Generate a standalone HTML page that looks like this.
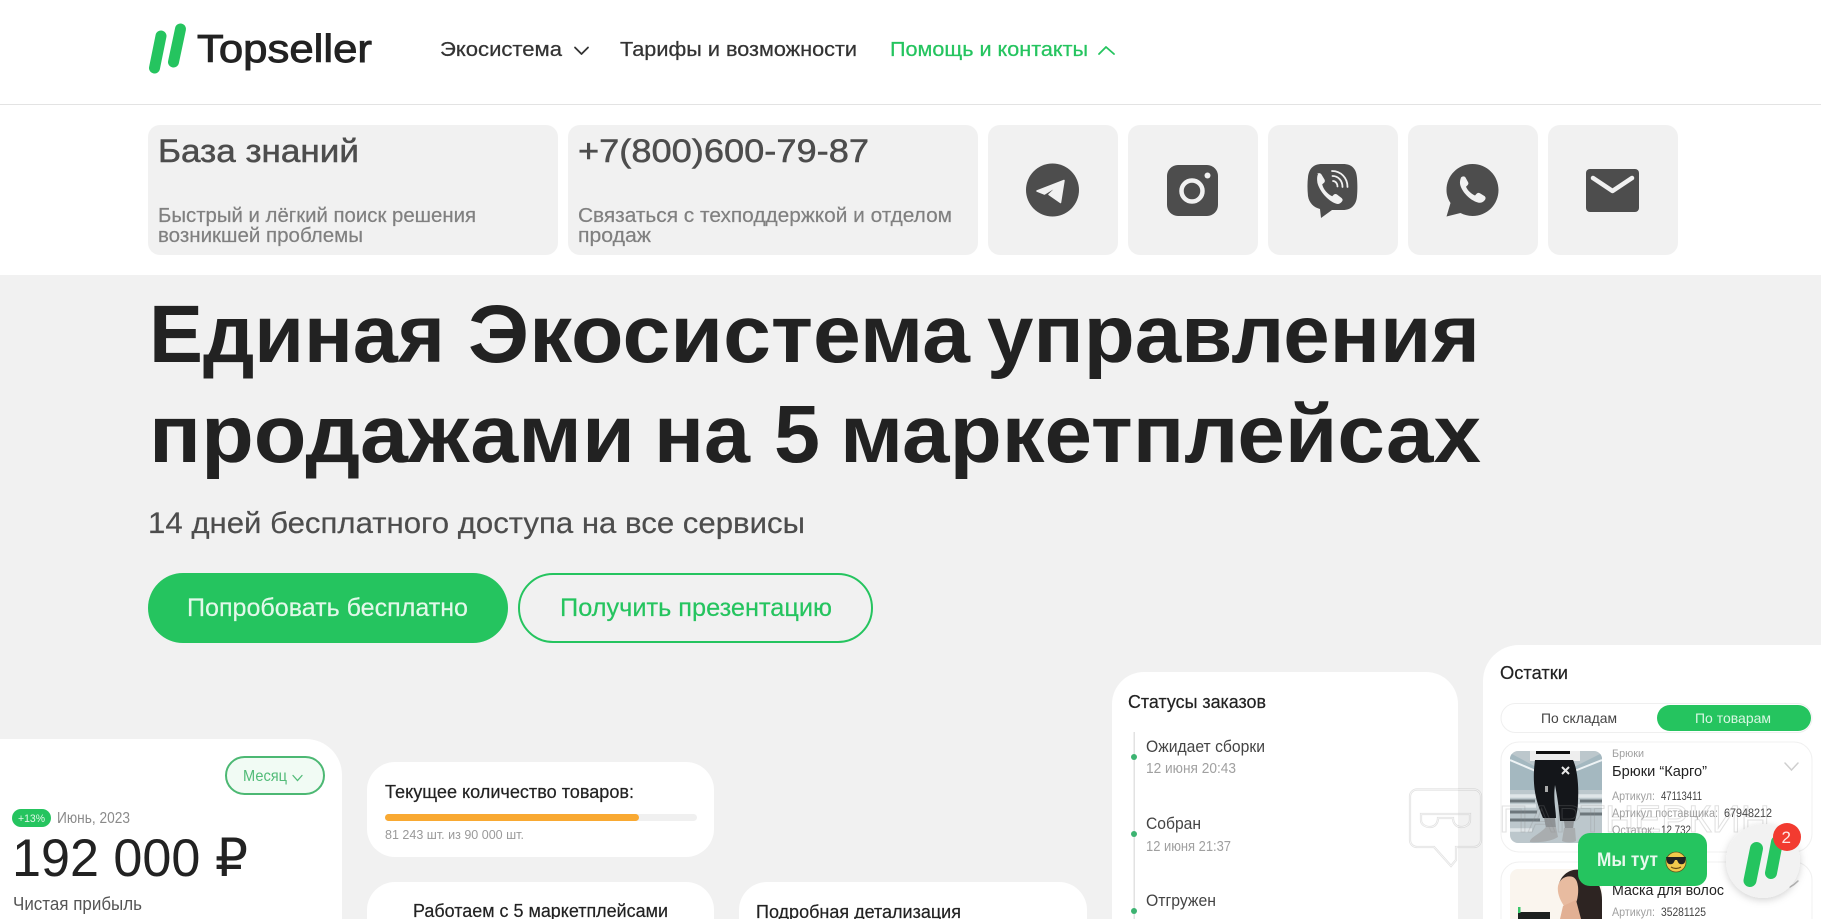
<!DOCTYPE html>
<html lang="ru"><head><meta charset="utf-8"><title>Topseller</title>
<style>
html,body{margin:0;padding:0;width:1821px;height:919px;overflow:hidden;background:#fff}
svg{display:block;position:absolute;left:0;top:0;overflow:hidden}
text{font-family:"Liberation Sans","DejaVu Sans",sans-serif;white-space:pre}
.b{font-weight:700}
</style></head><body>
<svg width="1821" height="919" viewBox="0 0 1821 919" xmlns="http://www.w3.org/2000/svg">
<defs>
<filter id="sh" x="-30%" y="-30%" width="160%" height="160%"><feDropShadow dx="0" dy="2" stdDeviation="4" flood-color="#000" flood-opacity=".18"/></filter>
<clipPath id="c1"><rect x="1510" y="751" width="92" height="92" rx="8"/></clipPath>
<clipPath id="c2"><path d="M1510 919V877a8 8 0 0 1 8-8H1594a8 8 0 0 1 8 8V919Z"/></clipPath>
</defs>
<rect width="1821" height="919" fill="#fff"/>
<!-- header -->
<path d="M154.500 68 161 36" stroke="#25c45f" stroke-width="11" stroke-linecap="round"/>
<path d="M173.500 62 180.500 29" stroke="#25c45f" stroke-width="11" stroke-linecap="round"/>
<text x="197" y="62" font-size="39" fill="#222" textLength="175" lengthAdjust="spacingAndGlyphs" stroke="#222" stroke-width=".9">Topseller</text>
<text x="440" y="56" font-size="20.500" fill="#333" stroke="#333" stroke-width=".25" textLength="122" lengthAdjust="spacingAndGlyphs">Экосистема</text>
<path d="M575 47.500 581.500 54 588 47.500" fill="none" stroke="#333" stroke-width="1.800" stroke-linecap="round" stroke-linejoin="round"/>
<text x="620" y="56" font-size="20.500" fill="#333" stroke="#333" stroke-width=".25" textLength="237" lengthAdjust="spacingAndGlyphs">Тарифы и возможности</text>
<text x="890" y="56" font-size="20.500" fill="#25c45f" stroke="#25c45f" stroke-width=".25" textLength="198" lengthAdjust="spacingAndGlyphs">Помощь и контакты</text>
<path d="M1099 54 1106 47 1114 54" fill="none" stroke="#25c45f" stroke-width="1.800" stroke-linecap="round" stroke-linejoin="round"/>
<rect x="0" y="104" width="1821" height="1" fill="#e3e3e3"/>
<!-- contact row -->
<g fill="#f1f1f1">
<rect x="148" y="125" width="410" height="130" rx="12"/>
<rect x="568" y="125" width="410" height="130" rx="12"/>
<rect x="988" y="125" width="130" height="130" rx="12"/>
<rect x="1128" y="125" width="130" height="130" rx="12"/>
<rect x="1268" y="125" width="130" height="130" rx="12"/>
<rect x="1408" y="125" width="130" height="130" rx="12"/>
<rect x="1548" y="125" width="130" height="130" rx="12"/>
</g>
<text x="158" y="162" font-size="32.500" fill="#4d4d4d" stroke="#4d4d4d" stroke-width=".5" textLength="201" lengthAdjust="spacingAndGlyphs">База знаний</text>
<text x="578" y="162" font-size="32.500" fill="#4d4d4d" stroke="#4d4d4d" stroke-width=".5" textLength="291" lengthAdjust="spacingAndGlyphs">+7(800)600-79-87</text>
<g font-size="20" fill="#808080" stroke="#808080" stroke-width=".2">
<text x="158" y="222" textLength="318" lengthAdjust="spacingAndGlyphs">Быстрый и лёгкий поиск решения</text>
<text x="158" y="242" textLength="205" lengthAdjust="spacingAndGlyphs">возникшей проблемы</text>
<text x="578" y="222" textLength="374" lengthAdjust="spacingAndGlyphs">Связаться с техподдержкой и отделом</text>
<text x="578" y="242" textLength="73" lengthAdjust="spacingAndGlyphs">продаж</text>
</g>
<!-- telegram -->
<circle cx="1052.500" cy="190" r="26.500" fill="#4d4d4d"/>
<path d="M1037 191 1064 180.500 1060.500 202.500 1049 194.500 1059 185 1044.500 194Z" fill="#f1f1f1" stroke="#f1f1f1" stroke-width="1.500" stroke-linejoin="round"/>
<!-- instagram -->
<rect x="1167" y="165" width="51" height="51" rx="11" fill="#4d4d4d"/>
<circle cx="1192" cy="191" r="10.500" fill="none" stroke="#f1f1f1" stroke-width="4.500"/>
<circle cx="1207.500" cy="175.500" r="3" fill="#f1f1f1"/>
<!-- viber -->
<path d="M1322 164h21c9 0 13.500 5 14 14 .5 7 .5 12 0 18-.5 9-6 14-14 14h-11l-11 8-1-9c-6-1.500-11-6-12-13-.7-7-.7-13 0-19 1-8 5-13 14-13Z" fill="#4d4d4d"/>
<path d="M1317 174c2-1.500 3.500-1 4.500.5l3 5c.8 1.500.3 2.800-1 3.800l-1.300 1c1 5 5.500 10 10 12l1.500-1.500c1-1 2.200-1 3.500-.2l4.500 3.500c1.200 1 1.200 2.400.2 3.500-1.500 2-3.500 2.800-5.500 2.200-9-3-17-13-19-21-.5-3.500-.5-6.500.6-8.800Z" fill="#f1f1f1"/>
<path d="M1332 171c9 0 15.500 7 15.500 16M1332.500 176c6 0 10 5 10 11M1333 181c2.500 0 4.500 2.500 4.500 5.500" fill="none" stroke="#f1f1f1" stroke-width="1.800" stroke-linecap="round"/>
<!-- whatsapp -->
<path d="M1472.500 164c14.500 0 26 11.500 26 26s-11.500 26-26 26c-4.500 0-8.500-1.200-12-3l-14 3.500 4-13.500c-2.500-4-4-8-4-13 0-14.500 11.500-26 26-26Z" fill="#4d4d4d"/>
<path d="M1461 177.500c1.500-1.500 3.500-1.500 4.500 0l2.500 4.500c.8 1.300.4 2.400-.6 3.400l-1.400 1.400c1.500 3.500 5 7 9 8.700l1.600-1.700c1-1 2.200-1.100 3.300-.5l4.500 2.700c1.400 1 1.500 2.500.5 4-2 2.500-4.500 3.300-7 2.500-8.500-2.500-15.500-10.500-17.500-17-1-3.500 0-6.200.6-8Z" fill="#f1f1f1"/>
<!-- mail -->
<rect x="1586" y="169" width="53" height="43" rx="4" fill="#4d4d4d"/>
<path d="M1593 178 1612.500 191 1632 178" fill="none" stroke="#f1f1f1" stroke-width="4.500" stroke-linecap="round" stroke-linejoin="round"/>
<!-- hero -->
<rect x="0" y="275" width="1821" height="644" fill="#f1f1f1"/>
<g class="b" font-size="82" fill="#222">
<text x="149" y="362" textLength="296" lengthAdjust="spacingAndGlyphs">Единая</text>
<text x="468" y="362" textLength="502" lengthAdjust="spacingAndGlyphs">Экосистема</text>
<text x="987" y="362" textLength="493" lengthAdjust="spacingAndGlyphs">управления</text>
<text x="149" y="462" textLength="486" lengthAdjust="spacingAndGlyphs">продажами</text>
<text x="654" y="462" textLength="96" lengthAdjust="spacingAndGlyphs">на</text>
<text x="774" y="462" textLength="46" lengthAdjust="spacingAndGlyphs">5</text>
<text x="840" y="462" textLength="641" lengthAdjust="spacingAndGlyphs">маркетплейсах</text>
</g>
<text x="148" y="533" font-size="30" fill="#4d4d4d" stroke="#4d4d4d" stroke-width=".2" textLength="657" lengthAdjust="spacingAndGlyphs">14 дней бесплатного доступа на все сервисы</text>
<rect x="148" y="573" width="360" height="70" rx="35" fill="#25c45f"/>
<text x="187" y="616" font-size="25" fill="#e2f8e9" stroke="#e2f8e9" stroke-width=".2" textLength="281" lengthAdjust="spacingAndGlyphs">Попробовать бесплатно</text>
<rect x="519" y="574" width="353" height="68" rx="34" fill="none" stroke="#25c45f" stroke-width="2"/>
<text x="560" y="616" font-size="25" fill="#25c45f" stroke="#25c45f" stroke-width=".2" textLength="272" lengthAdjust="spacingAndGlyphs">Получить презентацию</text>
<!-- profit card -->
<path d="M0 739H306a36 36 0 0 1 36 36V919H0Z" fill="#fff"/>
<rect x="226" y="757" width="98" height="37" rx="18.500" fill="#f1fbf4" stroke="#4cb873" stroke-width="2"/>
<text x="243" y="781" font-size="16" fill="#52bb78" textLength="44" lengthAdjust="spacingAndGlyphs">Месяц</text>
<path d="M293 775.500 297.500 780.500 302 775.500" fill="none" stroke="#52bb78" stroke-width="1.300" stroke-linecap="round"/>
<rect x="12" y="809" width="39" height="18" rx="9" fill="#25c45f"/>
<text x="18" y="822" font-size="11" fill="#dff7e7" textLength="27" lengthAdjust="spacingAndGlyphs">+13%</text>
<text x="57" y="823" font-size="15.500" fill="#8a8a8a" textLength="73" lengthAdjust="spacingAndGlyphs">Июнь, 2023</text>
<text x="12" y="876" font-size="53" fill="#222" textLength="236" lengthAdjust="spacingAndGlyphs">192 000 ₽</text>
<text x="13" y="910" font-size="18" fill="#555" textLength="129" lengthAdjust="spacingAndGlyphs">Чистая прибыль</text>
<!-- stock card -->
<rect x="367" y="762" width="347" height="95" rx="28" fill="#fff"/>
<text x="385" y="798" font-size="18" fill="#222" stroke="#222" stroke-width=".2" textLength="249" lengthAdjust="spacingAndGlyphs">Текущее количество товаров:</text>
<rect x="385" y="814" width="312" height="7" rx="3.500" fill="#f0f0f0"/>
<rect x="385" y="814" width="254" height="7" rx="3.500" fill="#f9a932"/>
<text x="385" y="839" font-size="13" fill="#9a9a9a" textLength="139" lengthAdjust="spacingAndGlyphs">81 243 шт. из 90 000 шт.</text>
<!-- lower cards -->
<path d="M367 919V910a28 28 0 0 1 28-28H686a28 28 0 0 1 28 28V919Z" fill="#fff"/>
<text x="413" y="917" font-size="18" fill="#222" stroke="#222" stroke-width=".2" textLength="255" lengthAdjust="spacingAndGlyphs">Работаем с 5 маркетплейсами</text>
<path d="M739 919V910a28 28 0 0 1 28-28H1059a28 28 0 0 1 28 28V919Z" fill="#fff"/>
<text x="756" y="918" font-size="18" fill="#222" stroke="#222" stroke-width=".2" textLength="205" lengthAdjust="spacingAndGlyphs">Подробная детализация</text>
<!-- statuses card -->
<path d="M1112 919V704a32 32 0 0 1 32-32H1426a32 32 0 0 1 32 32V919Z" fill="#fff"/>
<text x="1128" y="708" font-size="18" fill="#222" stroke="#222" stroke-width=".2" textLength="138" lengthAdjust="spacingAndGlyphs">Статусы заказов</text>
<rect x="1133.500" y="732" width="1.500" height="187" fill="#e2e2e2"/>
<g fill="#3cb371"><circle cx="1134" cy="757" r="3"/><circle cx="1134" cy="834" r="3"/><circle cx="1134" cy="911" r="3"/></g>
<g font-size="17" fill="#444">
<text x="1146" y="752" textLength="119" lengthAdjust="spacingAndGlyphs">Ожидает сборки</text>
<text x="1146" y="829" textLength="55" lengthAdjust="spacingAndGlyphs">Собран</text>
<text x="1146" y="906" textLength="70" lengthAdjust="spacingAndGlyphs">Отгружен</text>
</g>
<g font-size="14.500" fill="#a0a0a0">
<text x="1146" y="773" textLength="90" lengthAdjust="spacingAndGlyphs">12 июня 20:43</text>
<text x="1146" y="851" textLength="85" lengthAdjust="spacingAndGlyphs">12 июня 21:37</text>
</g>
<!-- stock list card -->
<path d="M1483 919V681a36 36 0 0 1 36-36H1821V919Z" fill="#fff"/>
<text x="1500" y="679" font-size="18" fill="#222" stroke="#222" stroke-width=".2" textLength="68" lengthAdjust="spacingAndGlyphs">Остатки</text>
<rect x="1501" y="703.500" width="311" height="29" rx="14.500" fill="#fff" stroke="#efefef"/>
<rect x="1657" y="705" width="154" height="26" rx="13" fill="#25c45f"/>
<text x="1541" y="723" font-size="14" fill="#444" textLength="76" lengthAdjust="spacingAndGlyphs">По складам</text>
<text x="1695" y="723" font-size="14" fill="#d9f7e3" textLength="76" lengthAdjust="spacingAndGlyphs">По товарам</text>
<rect x="1501" y="742" width="311" height="110" rx="18" fill="#fff" stroke="#f0f0f0"/>
<g clip-path="url(#c1)">
<rect x="1510" y="751" width="92" height="92" fill="#bcc7cc"/>
<path d="M1510 753 1538 768V790H1510Z" fill="#a4b8c0"/>
<path d="M1602 753 1572 768V790H1602Z" fill="#a4b8c0"/>
<path d="M1510 760 1538 772M1602 760 1572 772" stroke="#eef3f5" stroke-width="2"/>
<g stroke="#dfe5e8" stroke-width="3.500"><path d="M1510 796H1536M1510 806H1536M1578 796H1602M1578 806H1602M1510 830H1532"/></g>
<g stroke="#6d777c" stroke-width="3"><path d="M1510 801H1535M1510 812H1537M1510 820H1540M1580 801H1602M1580 814H1602"/></g>
<rect x="1530" y="751" width="50" height="10" fill="#eee"/><rect x="1536" y="751" width="34" height="3" fill="#111"/>
<path d="M1535 760H1573C1577 768 1579 785 1578 800 1578 810 1576 817 1575 821H1560C1559 808 1557 795 1555 785 1553 800 1556 810 1556 818H1543C1538 805 1531 790 1535 760Z" fill="#14161a"/>
<path d="M1562 767 1569 774M1569 767 1562 774" stroke="#e8e8e8" stroke-width="2"/>
<rect x="1545" y="786" width="3" height="6" fill="#aaa"/>
<path d="M1544 818h11l1 10h-10ZM1564 821h10l-1 8h-8Z" fill="#8f9396"/>
<path d="M1546 827h10l2 10c-6 4-18 6-28 5-1-4 10-8 16-15ZM1564 828h11l1 13c-3 2-10 2-14 0Z" fill="#a9adaf"/>
</g>
<text x="1612" y="757" font-size="11" fill="#a0a0a0" textLength="32" lengthAdjust="spacingAndGlyphs">Брюки</text>
<text x="1612" y="776" font-size="15" fill="#222" textLength="95" lengthAdjust="spacingAndGlyphs">Брюки “Карго”</text>
<g font-size="11.500" fill="#a0a0a0">
<text x="1612" y="800" textLength="43" lengthAdjust="spacingAndGlyphs">Артикул:</text>
<text x="1612" y="817" textLength="106" lengthAdjust="spacingAndGlyphs">Артикул поставщика:</text>
<text x="1612" y="834" textLength="43" lengthAdjust="spacingAndGlyphs">Остаток:</text>
</g>
<g font-size="11.500" fill="#444">
<text x="1661" y="800" textLength="41" lengthAdjust="spacingAndGlyphs">47113411</text>
<text x="1724" y="817" textLength="48" lengthAdjust="spacingAndGlyphs">67948212</text>
<text x="1661" y="834" textLength="30" lengthAdjust="spacingAndGlyphs">12 732</text>
</g>
<path d="M1785 763 1791.500 770 1798 763" fill="none" stroke="#cfcfcf" stroke-width="1.500" stroke-linecap="round"/>
<path d="M1501 919V880a18 18 0 0 1 18-18H1794a18 18 0 0 1 18 18V919" fill="#fff" stroke="#f0f0f0"/>
<g clip-path="url(#c2)">
<rect x="1510" y="869" width="92" height="50" fill="#faf5ee"/>
<path d="M1558 888C1560 874 1571 868 1581 870 1593 872 1602 884 1602 900V919H1576C1574 905 1566 900 1558 888Z" fill="#2d2422"/>
<path d="M1558 886C1560 878 1567 875 1573 877 1579 880 1579 892 1577 900 1575 907 1569 909 1564 906 1560 900 1557 893 1558 886Z" fill="#e8bba0"/>
<path d="M1563 906 1576 900 1581 919H1560Z" fill="#e2b094"/>
<rect x="1518" y="912" width="32" height="7" fill="#1c1f1e"/>
<rect x="1518" y="907" width="2.500" height="6" fill="#39c76a"/>
</g>
<text x="1612" y="895" font-size="15" fill="#222" textLength="112" lengthAdjust="spacingAndGlyphs">Маска для волос</text>
<text x="1612" y="916" font-size="11.500" fill="#a0a0a0" textLength="43" lengthAdjust="spacingAndGlyphs">Артикул:</text>
<text x="1661" y="916" font-size="11.500" fill="#444" textLength="45" lengthAdjust="spacingAndGlyphs">35281125</text>
<path d="M1790 887 1794 884.500 1798 881" fill="none" stroke="#bbb" stroke-width="1.500" stroke-linecap="round"/>
<!-- watermark -->
<g fill="none" stroke="#8c8c8c" stroke-opacity=".26" stroke-width="2.200">
<path d="M1417 789.500H1474a7 7 0 0 1 7 7V840a7 7 0 0 1-7 7H1456V860L1451 866 1434 847H1417a7 7 0 0 1-7-7V796.500a7 7 0 0 1 7-7Z"/>
<path d="M1421 814H1470V820C1470 825 1465 827 1461 827 1456 827 1453 823 1453 818H1438C1438 823 1435 827 1430 827 1426 827 1421 825 1421 820Z"/>
</g>
<g fill="none" stroke="#fff" stroke-opacity=".75" stroke-width=".8">
<path d="M1417 789.500H1474a7 7 0 0 1 7 7V840a7 7 0 0 1-7 7H1456V860L1451 866 1434 847H1417a7 7 0 0 1-7-7V796.500a7 7 0 0 1 7-7Z"/>
<path d="M1421 814H1470V820C1470 825 1465 827 1461 827 1456 827 1453 823 1453 818H1438C1438 823 1435 827 1430 827 1426 827 1421 825 1421 820Z"/>
</g>
<text x="1499" y="832" font-size="38" fill="none" stroke="#8c8c8c" stroke-opacity=".26" stroke-width="1" textLength="271" lengthAdjust="spacingAndGlyphs">ПАРТНЕРКИН</text>
<!-- chat widget -->
<rect x="1578" y="833" width="129" height="53" rx="12" fill="#25c45f"/>
<text x="1597" y="866" font-size="19" class="b" fill="#e7f9ed" textLength="61" lengthAdjust="spacingAndGlyphs">Мы тут</text>
<g transform="translate(0 -3)">
<circle cx="1676" cy="865" r="10" fill="#f2c94c" stroke="#5f5a20" stroke-width=".8"/>
<path d="M1666 860H1686L1685 865C1684 868 1679 868 1678 865L1677 863H1675L1674 865C1673 868 1668 868 1667 865Z" fill="#222"/>
<path d="M1671 870C1674 872 1678 872 1681 870" fill="none" stroke="#6b4b12" stroke-width="1.200"/>
</g>
<circle cx="1763" cy="861" r="37" fill="#f2f2f2" filter="url(#sh)"/>
<path d="M1750 880.500 1756.500 848.500" stroke="#25c45f" stroke-width="13" stroke-linecap="round"/>
<path d="M1771 873 1777 842" stroke="#25c45f" stroke-width="12" stroke-linecap="round"/>
<circle cx="1787" cy="837" r="14" fill="#f23b30"/>
<text x="1781.500" y="843" font-size="17" fill="#ffe7e5">2</text>
</svg>
</body></html>
